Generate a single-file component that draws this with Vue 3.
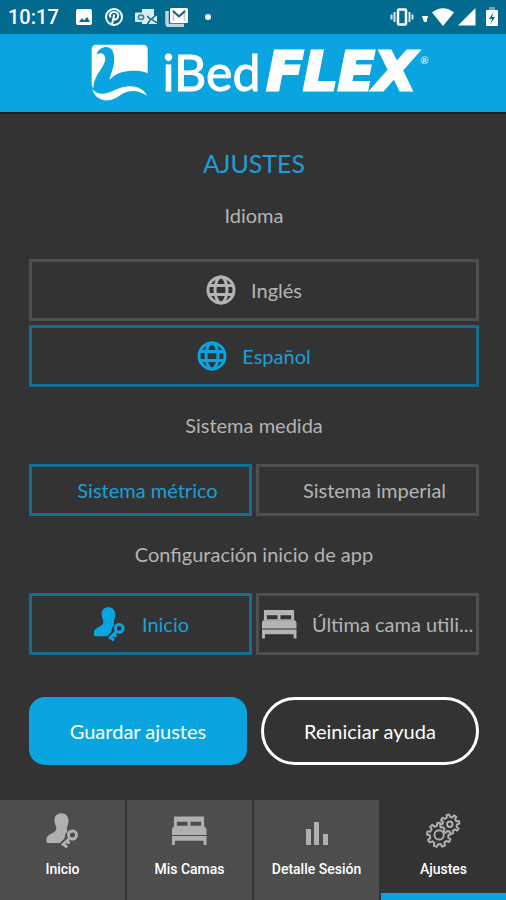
<template>
  <div class="app">
    <svg class="sprite" aria-hidden="true">
      <symbol id="icon-globe" viewBox="0 0 30 30">
        <g fill="none" stroke="currentColor" stroke-width="3">
          <circle cx="15" cy="15" r="13" />
          <ellipse cx="15" cy="15" rx="6" ry="13" />
          <path d="M3 10.500H27M3 19.500H27" />
        </g>
      </symbol>
      <symbol id="icon-user" viewBox="0 0 32 36">
        <path
          fill="currentColor"
          d="M8 7C8 2.500 11 .3 15 .3S22 3 22 8C22 12 20 13.500 20.500 17L21 19C18 20 19 24 17.500 26L13.500 30H1.500Q0 30 0 28.500V26.500C0 23 3 21.500 6 20C9 18.500 10.500 16 9.500 13.500C8.500 11 8 9.500 8 7Z"
        />
        <circle cx="26" cy="22" r="4" fill="none" stroke="currentColor" stroke-width="3" />
        <path fill="none" stroke="currentColor" stroke-width="3" d="M23.500 25L15.500 32.500M17 30.500L20.500 34.500M20.500 28L23 30.500" />
      </symbol>
      <symbol id="icon-bed" viewBox="0 0 36 30">
        <path
          fill="currentColor"
          fill-rule="evenodd"
          d="M2 0H33V11H2ZM5 5.500V9.500H16V5.500ZM19 5.500V9.500H30V5.500Z"
        />
        <path fill="currentColor" d="M1 10.500H34L35.500 13V19H0V13ZM0 20.200H35.500V29.500H32.500V25H3V29.500H0Z" />
      </symbol>
      <symbol id="icon-chart" viewBox="0 0 35 36">
        <path fill="currentColor" d="M7 16H12V32H7ZM15 9H20V32H15ZM24 21H29V32H24Z" />
      </symbol>
      <symbol id="icon-gears" viewBox="0 0 36 36">
        <g fill="#333" stroke="currentColor" stroke-width="2" stroke-linejoin="round">
          <path :d="gear(13.5, 22, 9, 12.5, 9.6)" />
          <circle cx="13.500" cy="22" r="4.800" />
          <path :d="gear(24.5, 11, 8, 10, 7.4)" />
          <circle cx="24.500" cy="11" r="2.800" />
        </g>
      </symbol>
    </svg>

    <div class="status-bar">
      <span class="clock">10:17</span>
      <svg class="status-icon" viewBox="0 0 18 18">
        <rect x="1" y="1" width="16" height="16" rx="2" fill="#fff" />
        <path d="M4 14L7 10L9 12.500L12 9L15 14Z" fill="#036b90" />
      </svg>
      <svg class="status-icon" viewBox="0 0 18 18">
        <circle cx="9" cy="9" r="8" fill="none" stroke="#fff" stroke-width="2" />
        <path d="M5.500 9.500C4 6 6 4 9 4C12.500 4 14 6.500 13 9C12 12 9 12 8.500 10.500M9.300 6.500L7 16" fill="none" stroke="#fff" stroke-width="2" />
      </svg>
      <svg class="status-icon outlook" viewBox="0 0 22 18">
        <path d="M7 1H19V7L22 8V16H7Z" fill="#dcebf1" />
        <path d="M12 8L16 11.500L22 6M12.500 16L15 12M22 15L17 11.500" fill="none" stroke="#036b90" stroke-width="1.500" />
        <rect x="0" y="4.500" width="12" height="9.500" rx="1" fill="#dcebf1" />
        <ellipse cx="6" cy="9.300" rx="2.600" ry="2.200" fill="none" stroke="#36829f" stroke-width="1.600" />
      </svg>
      <svg class="status-icon mail" viewBox="0 0 24 20">
        <path d="M2 4V16.500Q2 18.500 4 18.500H19" fill="none" stroke="#bcd5e0" stroke-width="3.500" />
        <rect x="5" y="1" width="18" height="15" rx="1.500" fill="#fff" />
        <path d="M8.500 14V4.500L14 9.500L19.500 4.500V14" fill="none" stroke="#c8cfdb" stroke-width="2" />
        <path d="M8 4L14 9.500L20 4" fill="none" stroke="#245f7d" stroke-width="2" />
      </svg>
      <span class="dot"></span>
      <span class="spacer"></span>
      <svg class="status-icon vibrate" viewBox="0 0 24 18">
        <rect x="8" y="1.500" width="8" height="15" rx="1" fill="none" stroke="#fff" stroke-width="2.500" />
        <path d="M4.500 4V14M19.500 4V14M1.500 6.500V11.500M22.500 6.500V11.500" stroke="#d5e6ed" stroke-width="2" />
      </svg>
      <svg class="status-icon wifi" viewBox="0 0 32 18">
        <path d="M0 8H6L4.500 14H2ZM10 4.500Q21-4 32 4.500L21 18Z" fill="#fff" />
      </svg>
      <svg class="status-icon" viewBox="0 0 18 18">
        <path d="M17.500 0V17.500H0Z" fill="#fff" />
      </svg>
      <svg class="status-icon battery" viewBox="0 0 12 20">
        <path d="M3 0H9V3H3Z" fill="#6ea5bb" />
        <rect y="3" width="12" height="16" rx="1" fill="#fff" />
        <path d="M7.500 5L3 12H6L4.500 17L9 10H6Z" fill="#036b90" />
      </svg>
    </div>

    <header class="brand">
      <svg class="swan" viewBox="0 0 170 170" aria-hidden="true">
        <path
          fill="#fff"
          d="M2 16Q2 2 16 2H155Q169 2 169 16V87C150 79 128 79 108 81C84 83 66 95 55 107C58 88 71 68 69 40C68 18 58 8 44 9C30 10 19 20 17 31C25 26 36 26 40 34C47 45 39 60 29 76C17 94 8 108 7 132L2 124Z"
        />
        <path
          fill="#fff"
          d="M4 134C18 150 37 151 55 144C76 136 90 127 115 126C140 125 160 137 167 154C149 142 128 137 111 142C86 148 78 166 53 168C27 170 8 155 4 134Z"
        />
      </svg>
      <span class="ibed">iBed</span><span class="flex-word">FLEX</span><sup class="mark">®</sup>
    </header>

    <main class="settings">
      <h1>AJUSTES</h1>

      <h2 class="first">Idioma</h2>
      <div class="options">
        <button
          v-for="item in languages"
          :key="item"
          type="button"
          class="option"
          :class="{ selected: language === item }"
          :aria-pressed="language === item"
          @click="language = item"
        >
          <svg class="globe" aria-hidden="true"><use href="#icon-globe" /></svg>
          <span>{{ item }}</span>
        </button>
      </div>

      <h2>Sistema medida</h2>
      <div class="options pair">
        <button
          v-for="item in systems"
          :key="item"
          type="button"
          class="option short"
          :class="{ selected: system === item }"
          :aria-pressed="system === item"
          @click="system = item"
        >
          <span>{{ item }}</span>
        </button>
      </div>

      <h2>Configuración inicio de app</h2>
      <div class="options pair">
        <button
          v-for="item in starts"
          :key="item.label"
          type="button"
          class="option"
          :class="{ selected: start === item.label }"
          :aria-pressed="start === item.label"
          @click="start = item.label"
        >
          <svg class="start-icon" aria-hidden="true"><use :href="item.icon" /></svg>
          <span>{{ item.label }}</span>
        </button>
      </div>

      <div class="actions">
        <button type="button" class="save">Guardar ajustes</button>
        <button type="button" class="reset">Reiniciar ayuda</button>
      </div>
    </main>

    <nav class="tabs">
      <a
        v-for="tab in tabs"
        :key="tab.label"
        href="#"
        class="tab"
        :class="{ active: activeTab === tab.label }"
        @click.prevent="activeTab = tab.label"
      >
        <svg class="tab-icon" aria-hidden="true"><use :href="tab.icon" /></svg>
        <span>{{ tab.label }}</span>
      </a>
    </nav>
  </div>
</template>

<script setup>
import { ref } from "vue";

const languages = ["Inglés", "Español"];
const systems = ["Sistema métrico", "Sistema imperial"];
const starts = [
  { label: "Inicio", icon: "#icon-user" },
  { label: "Última cama utili...", icon: "#icon-bed" },
];
const tabs = [
  { label: "Inicio", icon: "#icon-user" },
  { label: "Mis Camas", icon: "#icon-bed" },
  { label: "Detalle Sesión", icon: "#icon-chart" },
  { label: "Ajustes", icon: "#icon-gears" },
];

const language = ref("Español");
const system = ref("Sistema métrico");
const start = ref("Inicio");
const activeTab = ref("Ajustes");

// outline of a toothed wheel
const gear = (cx, cy, teeth, outer, inner) => {
  const step = (Math.PI * 2) / teeth;
  const points = [];
  for (let i = 0; i < teeth; i++) {
    [
      [inner, -0.3],
      [outer, -0.18],
      [outer, 0.18],
      [inner, 0.3],
    ].forEach(([r, shift]) => {
      const a = (i + shift) * step - 0.2;
      points.push(`${(cx + r * Math.cos(a)).toFixed(2)} ${(cy + r * Math.sin(a)).toFixed(2)}`);
    });
  }
  return `M${points.join("L")}Z`;
};
</script>

<style>
body {
  margin: 0;
  background: #333;
}
</style>

<style scoped>
.app {
  min-height: 100vh;
  display: flex;
  flex-direction: column;
  background: #333;
  color: #b4b4b4;
  font-family: Lato, "Open Sans", sans-serif;
}

.sprite {
  position: absolute;
  width: 0;
  height: 0;
}

.status-bar {
  height: 34px;
  box-sizing: border-box;
  padding: 0 8px;
  display: flex;
  align-items: center;
  gap: 12px;
  background: #036b90;
  color: #fff;
}

.clock {
  font: 500 20px/24px Roboto, sans-serif;
  margin-right: 4px;
}

.status-icon {
  width: 18px;
  height: 18px;
  flex: none;
}

.outlook {
  width: 22px;
}

.mail {
  width: 24px;
  height: 20px;
  margin-left: -4px;
}

.dot {
  width: 6px;
  height: 6px;
  margin-left: 4px;
  border-radius: 50%;
  background: #fff;
}

.spacer {
  flex: 1;
}

.vibrate {
  width: 24px;
  margin-right: -4px;
}

.wifi {
  width: 32px;
  margin-right: -8px;
}

.battery {
  width: 12px;
  height: 20px;
  margin-left: -2px;
}

.brand {
  height: 80px;
  box-sizing: border-box;
  padding: 0 0 2px 14px;
  display: flex;
  align-items: center;
  justify-content: center;
  background: #0aa5e1;
  border-bottom: 2px solid #1d1d1d;
  color: #fff;
  line-height: 64px;
}

.swan {
  width: 57px;
  height: 57px;
  margin-right: 14px;
}

.ibed {
  font-size: 50px;
  font-weight: 400;
  -webkit-text-stroke: 1px #fff;
}

.flex-word {
  margin-left: 6px;
  font: italic 700 54px/64px "DejaVu Sans", sans-serif;
  -webkit-text-stroke: 3px #fff;
}

.mark {
  align-self: flex-start;
  padding-top: 20px;
  margin-left: 4px;
  font-size: 10px;
  line-height: 12px;
}

.settings {
  flex: 1;
  padding: 31px 27px 32px 29px;
}

h1,
h2 {
  margin: 0;
  text-align: center;
  font-weight: 400;
}

h1 {
  color: #1c9fd8;
  font-size: 25px;
  line-height: 36px;
}

h2 {
  margin: 24px 0 25px;
  font-size: 20px;
  line-height: 28px;
}

h2.first {
  margin: 20px 0 30px;
}

.options {
  display: grid;
  gap: 4px;
}

.pair {
  grid-template-columns: repeat(2, minmax(0, 1fr));
}

.option {
  height: 62px;
  min-width: 0;
  padding: 0;
  display: flex;
  align-items: center;
  justify-content: center;
  gap: 15px;
  border: 3px solid #4f4f4f;
  background: transparent;
  color: #b4b4b4;
  font-family: inherit;
  font-size: 20px;
  line-height: 28px;
  cursor: pointer;
}

.option.short {
  height: 52px;
  padding-left: 14px;
}

.option.selected {
  border-color: #126d91;
  color: #1c9fd8;
}

.option span {
  overflow: hidden;
  text-overflow: ellipsis;
  white-space: nowrap;
}

.globe {
  width: 30px;
  height: 30px;
  flex: none;
}

.start-icon {
  width: 35px;
  height: 35px;
  flex: none;
}

.selected svg {
  color: #0aa5e1;
}

.actions {
  margin-top: 42px;
  display: grid;
  grid-template-columns: 1fr 1fr;
  gap: 14px;
}

.actions button {
  height: 68px;
  color: #fff;
  font-family: inherit;
  font-size: 20px;
  cursor: pointer;
}

.save {
  border: none;
  border-radius: 16px;
  background: #0aa5e1;
}

.reset {
  border: 3px solid #fff;
  border-radius: 34px;
  background: transparent;
}

.tabs {
  display: grid;
  grid-template-columns: repeat(4, minmax(0, 1fr));
  gap: 2px;
}

.tab {
  height: 100px;
  box-sizing: border-box;
  padding-top: 13px;
  display: flex;
  flex-direction: column;
  align-items: center;
  gap: 10px;
  border-bottom: 7px solid #4d4d4d;
  background: #4d4d4d;
  color: #fff;
  font: 500 14px/20px Roboto, sans-serif;
  text-decoration: none;
}

.tab.active {
  background: #333;
  border-color: #0aa5e1;
}

.tab-icon {
  width: 35px;
  height: 36px;
  color: #b0b0b0;
}
</style>
